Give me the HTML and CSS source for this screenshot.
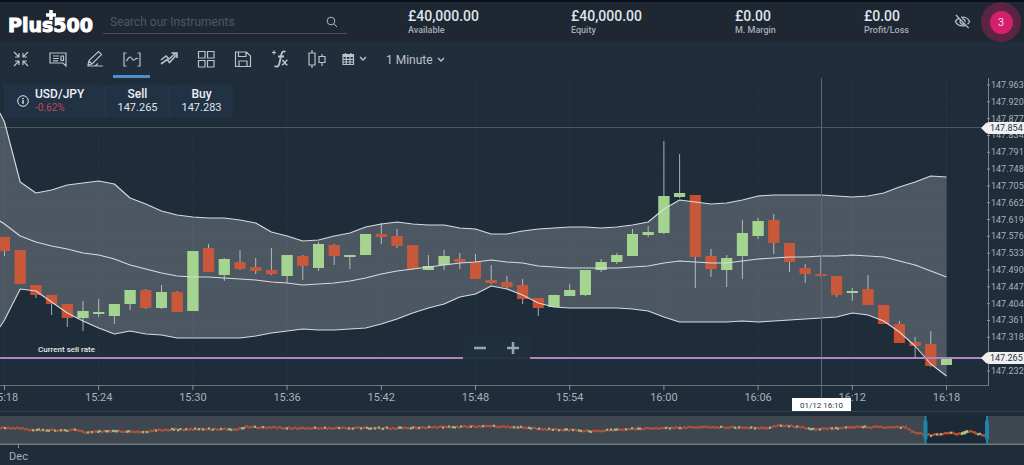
FILE: index.html
```html
<!DOCTYPE html>
<html lang="en">
<head>
<meta charset="utf-8">
<title>Plus500 – USD/JPY</title>
<link rel="stylesheet" href="styles.css">
</head>
<body>
<header class="header">
  <div class="logo">Plus500<svg class="logo-plus" viewBox="0 0 10 10" aria-hidden="true"><path d="M3.200 0h3.600v3.200h3.200v3.600h-3.200v3.200h-3.600v-3.200h-3.200v-3.600h3.200z"/></svg></div>
  <div class="search">
    <input type="search" aria-label="Search our Instruments" placeholder="Search our Instruments">
    <button type="button" aria-label="Search"><svg viewBox="0 0 12 12"><circle cx="5" cy="5" r="3.8"/><path d="M8 8l3 3"/></svg></button>
  </div>
  <dl class="stats">
    <div><dd>£40,000.00</dd><dt>Available</dt></div>
    <div><dd>£40,000.00</dd><dt>Equity</dt></div>
    <div><dd>£0.00</dd><dt>M. Margin</dt></div>
    <div><dd>£0.00</dd><dt>Profit/Loss</dt></div>
  </dl>
  <div class="account">
    <button type="button" class="eye" aria-label="Hide balances"><svg viewBox="0 0 18 16"><path d="M5.500 4.300C3.500 5.200 2 6.700 1.500 8c1.200 2.700 4.200 4.600 7.500 4.600 1.200 0 2.300-.2 3.300-.6M7.500 3.500C12 3 15.500 5.300 16.500 8c-.4 1-1.200 2-2.200 2.800M6.700 6.500A3 3 0 0 0 10.300 10.700M8.500 5.300A2.800 2.800 0 0 1 11.800 8.600M2 1l13.500 14"/></svg></button>
    <button type="button" class="notice" aria-label="3 notifications"><span>3</span></button>
  </div>
</header>

<nav class="toolbar" aria-label="Chart tools">
  <button type="button" aria-label="Collapse"><svg viewBox="0 0 20 20"><path d="M3 3l5 5M8 4v4H4M17 3l-5 5M12 4v4h4M3 17l5-5M4 12h4v4M17 17l-5-5M16 12h-4v4"/></svg></button>
  <button type="button" aria-label="News"><svg viewBox="0 0 20 20"><path d="M2 4h16v13l-3-3H2zM5 7h6M5 9.500h6M5 11.800h5M13 7h2.500v4.500H13z"/></svg></button>
  <button type="button" aria-label="Draw"><svg viewBox="0 0 20 20"><path d="M3 16l1-4.500L13.500 2.500l3 3L7 15zM4 12l3 3M2.500 17H18M10 17l3-2.500"/></svg></button>
  <button type="button" class="active" aria-label="Indicators"><svg viewBox="0 0 20 20"><path d="M4.500 4H2v13h2.500M15.500 4H18v13h-2.500M4 12c2-1 2-4 4-4s2 4 4 3 2-3 4-1"/></svg></button>
  <button type="button" aria-label="Trend"><svg viewBox="0 0 20 20"><path d="M2 11l5-4 3 3 7-6M12.500 4H18v5M2 15l6-4.500 2.500 3L17.500 6" stroke-width="1.600"/></svg></button>
  <button type="button" aria-label="Layout"><svg viewBox="0 0 20 20"><path d="M2.500 2.500H9V9H2.500zM11.500 2.500H18V9h-6.500zM2.500 11.500H9V18H2.500zM11.500 11.500H18V18h-6.500z"/></svg></button>
  <button type="button" aria-label="Save"><svg viewBox="0 0 20 20"><path d="M2.500 3h11L17.500 7v10.500h-15zM5.500 3v4.500H13V3M6 17.500V12h8v5.500"/></svg></button>
  <button type="button" aria-label="Functions"><svg viewBox="0 0 20 20"><path d="M2 3.500h4M4 1.500v4"/><path d="M15.500 2.800c-2.500-1.300-3.700 0-4.200 3L9.500 14c-.6 3-2.500 4.500-5 3M8 7.500h6" stroke-width="1.800"/><path d="M12 11.500c2.500-1 2.500 5.500 5.500 4M17.500 11c-2 .5-3 5-5.700 4.800" stroke-width="1.500"/></svg></button>
  <button type="button" aria-label="Chart type"><svg viewBox="0 0 20 20"><path d="M2 4h6v12H2zM5 1v3M5 16v3M12 7.500h6v6h-6zM15 5v2.500M15 13.500V17"/></svg></button>
  <button type="button" class="calendar" aria-label="Date range"><svg viewBox="0 0 14 14"><path d="M2 2.500h10.500v10H2zM2 4.500h10.500M2 7.300h10.500M2 10h10.500M5.300 5v7M9 5v7M4.500 1v2M10 1v2"/><path d="M2 3.500h10.500" stroke-width="2.500"/></svg><svg class="chevron" viewBox="0 0 8 6"><path d="M1 1l3 3 3-3"/></svg></button>
  <label class="interval"><select aria-label="Interval"><option>1 Minute</option></select><svg class="chevron" viewBox="0 0 8 6"><path d="M1 1l3 3 3-3"/></svg></label>
</nav>

<main class="chart">
  <svg class="plot" id="plot" viewBox="0 78 1024 334" role="img" aria-label="USD/JPY one minute candles"></svg>
  <section class="quote">
    <div class="pair">
      <svg viewBox="0 0 12 12" aria-hidden="true"><circle cx="6" cy="6" r="5.300"/><path d="M6 5.300v3.400M6 3v1.200" stroke-width="1.500"/></svg>
      <div><strong>USD/JPY</strong><span class="loss">-0.62%</span></div>
    </div>
    <button type="button"><strong>Sell</strong><span>147.265</span></button>
    <button type="button"><strong>Buy</strong><span>147.283</span></button>
  </section>
  <div class="zoom">
    <button type="button" aria-label="Zoom out"><svg viewBox="0 0 14 14"><path d="M1 7h12"/></svg></button>
    <button type="button" aria-label="Zoom in"><svg viewBox="0 0 14 14"><path d="M1 7h12M7 1v12"/></svg></button>
  </div>
</main>
<svg class="navigator" id="navigator" viewBox="0 412 1024 53" role="img" aria-label="History overview"></svg>
<script src="chart.js"></script>
</body>
</html>
```
FILE: styles.css
```css
* { box-sizing: border-box; }

body {
  margin: 0;
  background: #1f2c39;
  color: #dfe4ea;
  font-family: Roboto, "Liberation Sans", sans-serif;
  overflow-x: hidden;
}

button, input, select {
  margin: 0;
  padding: 0;
  border: 0;
  background: none;
  color: inherit;
  font: inherit;
}

svg { display: block; fill: none; stroke: currentColor; }

.header {
  display: grid;
  grid-template-columns: 95px 305px 1fr 70px;
  align-items: center;
  height: 42px;
  padding-left: 8px;
  border-top: 2px solid #09101b;
  background: #1f2733;
}

.logo {
  position: relative;
  padding-top: 6px;
  color: #fff;
  font: bold 19px/24px "DejaVu Sans", sans-serif;
  -webkit-text-stroke: 1px #fff;
}

.logo-plus {
  position: absolute;
  top: 3px;
  left: 38px;
  width: 10px;
  fill: #fff;
  stroke: none;
}

.search {
  display: flex;
  align-items: center;
  width: 244px;
  height: 24px;
  border-bottom: 1px solid #465060;
}

.search input {
  flex: 1;
  min-width: 0;
  padding-left: 7px;
  font-size: 12px;
  outline: 0;
}

.search input::placeholder { color: #4d5764; }
.search button { width: 30px; color: #aeb6bf; }
.search button svg { width: 12px; margin: auto; }

.stats {
  display: grid;
  grid-template-columns: 163fr 164fr 129fr 90fr;
  margin: 0;
}

.stats div { display: flex; flex-direction: column; }
.stats dd { margin: 0; font-size: 14px; font-weight: 500; line-height: 16px; }
.stats dt { color: #a5adb6; font-size: 9px; font-weight: 500; line-height: 12px; }

.account { display: flex; align-items: center; gap: 10px; }
.eye svg { width: 17px; color: #b6bdc5; stroke-width: 1.4; }

.notice {
  display: grid;
  place-items: center;
  flex: none;
  width: 40px;
  height: 40px;
  border-radius: 50%;
  background: #5a2442;
}

.notice span {
  width: 23px;
  border-radius: 50%;
  background: #d4206b;
  color: #f3dce6;
  font-size: 11px;
  line-height: 23px;
}

.toolbar {
  display: flex;
  height: 36px;
  padding-left: 2px;
  background: #202d3a;
  color: #bac2ca;
}

.toolbar button {
  display: flex;
  align-items: center;
  justify-content: center;
  width: 37px;
  border-bottom: 3px solid transparent;
}

.toolbar button svg { width: 20px; stroke-width: 1.2; }
.toolbar .active { border-color: #4f8fd0; }
.toolbar .calendar { justify-content: flex-start; gap: 4px; width: 48px; padding-left: 6px; }
.toolbar .calendar svg { width: 14px; }
.toolbar .calendar .chevron, .chevron { width: 8px; stroke-width: 1.4; }

.interval {
  display: flex;
  align-items: center;
  gap: 4px;
  padding: 0 0 1px 3px;
}

.interval select { appearance: none; font-size: 12px; }

.chart { position: relative; }
.plot, .navigator { width: 100%; height: auto; }

.plot text, .navigator text {
  fill: #aab1b9;
  stroke: none;
  font-size: 11px;
}

.plot .price { font-size: 9px; }
.plot .tag { fill: #26313d; font-size: 9px; }
.plot .date { fill: #26313d; font-size: 8px; }
.plot .note { fill: #e3e7eb; font-size: 8px; font-weight: 500; }
.middle { text-anchor: middle; }

.quote {
  position: absolute;
  top: 7px;
  left: 5px;
  display: flex;
  height: 32px;
  background: #223245;
}

.quote strong, .quote span { display: block; line-height: 13px; }
.quote strong { color: #edf0f4; font-size: 12px; font-weight: 500; }
.quote span { font-size: 11px; }
.quote .loss { color: #bf4657; font-size: 10px; }

.pair { display: flex; align-items: center; gap: 6px; width: 100px; padding-left: 12px; }
.pair svg { width: 12px; stroke-width: 1; }
.quote button { width: 64px; border-left: 1px solid #2d3c4c; }

.zoom {
  position: absolute;
  top: 77.2%;
  left: 45.2%;
  display: flex;
  width: 67px;
  height: 25px;
  background: #20303cf2;
  color: #9ca5ad;
}

.zoom button { flex: 1; }
.zoom svg { width: 14px; margin: auto; stroke-width: 2.5; }
```
FILE: chart.js
```js
const NS = 'http://www.w3.org/2000/svg';
const plot = document.getElementById('plot');
const nav = document.getElementById('navigator');
const xAt = i => 4.5 + i * 15.7;

function add(parent, tag, attrs, text) {
  const el = document.createElementNS(NS, tag);
  for (const key in attrs) el.setAttribute(key, attrs[key]);
  if (text) el.textContent = text;
  parent.appendChild(el);
  return el;
}
const line = (p, x1, y1, x2, y2, stroke, width = 1) =>
  add(p, 'line', { x1, y1, x2, y2, stroke, 'stroke-width': width });
const box = (p, x, y, width, height, fill, extra = {}) =>
  add(p, 'rect', { x, y, width, height, fill, stroke: 'none', ...extra });

// Candles: direction, body top, body bottom, wick top, wick bottom
const candles = [
  ['r',237,251,237,256],['r',250,284,250,284],['r',285,295,285,298],['r',295,304,295,315],
  ['r',304,318,304,327],['g',311,318,301,331],['g',312,314,299,317],['g',304,316,304,324],
  ['g',290,304,290,310],['r',290,308,289,309],['g',292,308,285,309],['r',292,312,291,312],
  ['g',251,311,251,311],['r',248,272,244,272],['g',259,275,258,281],['r',262,269,250,270],
  ['r',267,271,258,274],['r',270,274,248,275],['g',255,276,255,283],['r',256,266,255,280],
  ['g',244,268,242,271],['r',245,256,244,265],['g',255,257,255,269],['g',234,255,234,255],
  ['r',234,237,223,244],['r',236,246,229,248],['r',245,269,245,270],['g',266,270,255,270],
  ['g',256,265,250,270],['r',259,262,253,269],['r',262,279,254,279],['r',280,283,265,284],
  ['r',282,287,276,289],['r',285,299,279,304],['r',298,308,298,316],['g',295,307,295,307],
  ['g',290,296,284,296],['g',270,295,270,296],['g',262,270,259,272],['g',255,262,253,264],
  ['g',234,256,229,256],['g',232,235,226,237],['g',196,233,141,234],['g',193,197,154,198],
  ['r',195,257,195,288],['r',256,269,249,277],['g',258,270,255,287],['g',233,256,220,279],
  ['g',221,236,218,239],['r',220,243,214,254],['r',243,262,243,272],['r',268,274,264,283],
  ['r',274,276,255,277],['r',276,295,276,297],['g',291,293,288,301],['r',289,305,275,305],
  ['r',305,324,305,324],['r',324,343,321,343],['r',342,346,337,358],['r',344,366,331,367],
  ['g',358,365,358,365]
];

const upper = [122,182,193,190,185,183,181,184,198,204,211,215,217,218,218,220,223,232,236,241,240,236,233,227,224,222,224,225,225,228,229,234,234,231,229,228,227,227,228,227,225,222,209,200,202,204,203,200,196,195,195,195,195,196,197,196,193,187,182,176,177];
const middle = [224,236,242,246,249,253,255,259,265,269,273,276,277,277,278,279,280,282,283,285,284,283,281,278,274,271,269,267,265,263,262,260,262,263,266,267,268,268,268,268,267,266,263,261,262,263,263,261,259,258,257,257,256,256,255,256,257,261,265,271,277];
const lower = [320,289,291,302,313,321,328,334,331,334,335,338,338,338,338,338,336,333,331,329,330,330,329,328,324,319,313,308,304,297,294,286,289,295,303,307,308,308,308,308,309,311,317,322,322,322,322,321,322,321,320,319,318,317,313,315,321,332,346,364,376];
const points = (band, y0) => [[0, y0], ...band.map((y, i) => [xAt(i), y])];
const upperPts = points(upper, 113), middlePts = points(middle, 221), lowerPts = points(lower, 327);

// Grid and crosshair
for (let i = 0; i <= 60; i += 6) line(plot, xAt(i), 78, xAt(i), 385, '#253441');
for (let n = 0; n < 18; n++) line(plot, 0, 85 + n * 16.82, 988, 85 + n * 16.82, '#21303d');
line(plot, 0, 127.5, 988, 127.5, '#4b5763');

// Candles lie under the translucent band
for (const [i, [dir, top, bottom, high, low]] of candles.entries()) {
  line(plot, xAt(i), high, xAt(i), low, '#a6adb5');
  box(plot, xAt(i) - 5.5, top, 11, bottom - top, dir === 'r' ? '#bd2f12' : '#8cc776');
}
add(plot, 'polygon', { points: [...upperPts, ...lowerPts.slice().reverse()].join(' '), fill: '#dfe3e6', 'fill-opacity': .24, stroke: 'none' });
for (const [i, [dir, top, bottom]] of candles.entries())
  box(plot, xAt(i) - 5.5, top, 11, bottom - top, dir === 'r' ? '#cb5638' : '#a6d490', { 'fill-opacity': .8 });
for (const pts of [upperPts, middlePts, lowerPts])
  add(plot, 'polyline', { points: pts.join(' '), stroke: '#d6dbdf', 'stroke-width': 1.1, 'stroke-linejoin': 'round' });
line(plot, 821.5, 78, 821.5, 398, '#5b6772');
line(plot, 0, 358, 984, 358, '#b084bd', 1.8);
add(plot, 'text', { x: 38, y: 352, class: 'note' }, 'Current sell rate');

// Axes
line(plot, 0, 385.5, 988, 385.5, '#66717c');
line(plot, 988.5, 78, 988.5, 386, '#7b858f');
for (let n = 0; n < 18; n++) {
  const y = 85 + n * 16.82;
  line(plot, 987, y, 990, y, '#8b949d');
  if (n !== 16) add(plot, 'text', { x: 991, y: y + 3, class: 'price' }, (147.963 - n * .043).toFixed(3));
}
['15:18','15:24','15:30','15:36','15:42','15:48','15:54','16:00','16:06','16:12','16:18'].forEach((label, n) => {
  line(plot, xAt(n * 6), 385, xAt(n * 6), 390, '#87919a');
  add(plot, 'text', { x: xAt(n * 6), y: 401, class: 'middle' }, label);
});
for (const [y, label] of [[128, '147.854'], [358, '147.265']]) {
  add(plot, 'path', { d: `M981 ${y}l5-5q2-1 4-1h34v12h-34q-2 0-4-1z`, fill: '#f0f0f3', stroke: 'none' });
  add(plot, 'text', { x: 990, y: y + 3, class: 'tag' }, label);
}
box(plot, 792, 398, 59, 13, '#fff');
add(plot, 'text', { x: 821.5, y: 408, class: 'date middle' }, '01/12 16:10');
line(plot, 0, 411.5, 1024, 411.5, '#34414e');

// History overview
box(nav, 0, 416, 1024, 29, '#3e464f');
box(nav, 926, 416, 61, 28, '#1c2937');
line(nav, 0, 444.2, 1024, 444.2, '#707880', 1.6);
const trend = [[0,428],[20,428],[30,430],[76,430],[85,432],[110,431],[146,432],[153,430],[190,429],[235,429],[246,427],[300,428],[400,428],[440,427],[485,426],[520,427],[540,429],[570,430],[590,431],[625,429],[700,427],[765,428],[780,425],[800,427],[815,429],[850,427],[905,427],[912,432],[930,435],[950,433],[960,434],[968,431],[975,433],[986,436]];
let seed = 11;
const random = () => (seed = (seed * 16807) % 2147483647) / 2147483647;
for (let s = 1; s < trend.length; s++) {
  const [x0, y0] = trend[s - 1], [x1, y1] = trend[s];
  for (let x = x0; x < x1; x += 2) {
    const y = y0 + (y1 - y0) * (x - x0) / (x1 - x0);
    const up = random() > .75;
    box(nav, x, y - 1 + random() * 1.4 - .7, 2, 2.4, up ? '#9db184' : x > 926 ? '#c34c31' : '#a9523e');
  }
}
line(nav, 961, 434, 968, 431, '#9ccf87', 2.5);
for (const x of [925.5, 987]) {
  line(nav, x, 416, x, 444, '#1d86aa', 2);
  box(nav, x - 2, 420, 4, 20, '#1d86aa', { rx: 2 });
}
line(nav, 18.5, 444, 18.5, 448, '#87919a');
add(nav, 'text', { x: 18.5, y: 460, class: 'middle' }, 'Dec');
```
